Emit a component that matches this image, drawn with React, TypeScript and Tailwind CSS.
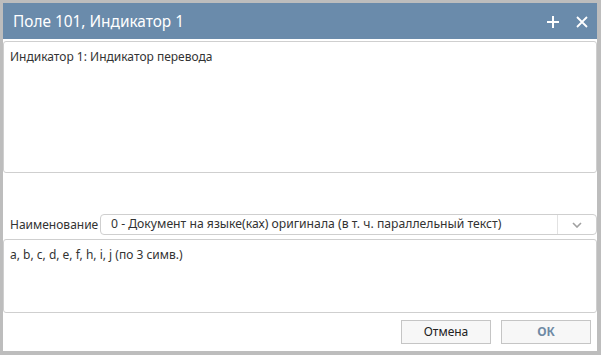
import React from "react";

export default function App() {
  const font = { fontFamily: '"Noto Sans", "Open Sans", sans-serif' };
  return (
    <div className="w-[601px] h-[355px] bg-white border-t-[3px] border-l-[3px] border-r-4 border-b-4 border-[#bdbdbd] flex flex-col" style={font}>
      <div className="h-[36px] shrink-0 bg-[#6a8bab] flex items-center pl-[10px] pr-[9px] text-white">
        <div className="text-[15.4px] flex-1 leading-none pt-[2px]">Поле 101, Индикатор 1</div>
        <svg width="14" height="14" viewBox="0 0 14 14" className="mr-[16px] mt-[2px]">
          <path d="M7 1v12M1 7h12" stroke="white" strokeWidth="2" />
        </svg>
        <svg width="12" height="12" viewBox="0 0 12 12" className="mt-[2px]">
          <path d="M1 1l10 10M11 1L1 11" stroke="white" strokeWidth="1.8" />
        </svg>
      </div>
      <div className="h-[2px] shrink-0" />
      <div className="h-[132px] shrink-0 border border-[#cfcfcf] rounded-[3px] px-[6px] pt-[7px] text-[12px] text-[#333] leading-[16px]">
        Индикатор 1: Индикатор перевода
      </div>
      <div className="h-[41px] shrink-0" />
      <div className="h-[21px] shrink-0 flex items-center">
        <div className="w-[97px] pl-[7px] text-[12px] text-[#333]">Наименование</div>
        <div className="flex-1 h-[21px] border border-[#cfcfcf] rounded-[4px] flex items-center">
          <div className="flex-1 pl-[10px] text-[12.2px] text-[#333] leading-none">0 - Документ на языке(ках) оригинала (в т. ч. параллельный текст)</div>
          <div className="w-[39px] h-full border-l border-[#e2e2e2] flex items-center justify-center">
            <svg width="10" height="6" viewBox="0 0 10 6">
              <path d="M1 1l4 4 4-4" stroke="#a0a0a0" strokeWidth="1.6" fill="none" />
            </svg>
          </div>
        </div>
      </div>
      <div className="h-[4px] shrink-0" />
      <div className="h-[74px] shrink-0 border border-[#cfcfcf] rounded-[3px] px-[6px] pt-[7px] text-[12px] text-[#333] leading-[16px]">
        a, b, c, d, e, f, h, i, j (по 3 симв.)
      </div>
      <div className="flex-1 flex items-center justify-end gap-[10px] pr-[6px]">
        <button className="w-[90px] h-[24px] bg-[#f7f7f7] border border-[#c5c5c5] text-[12px] text-[#222]">Отмена</button>
        <button className="w-[90px] h-[24px] bg-[#f7f7f7] border border-[#c5c5c5] text-[12px] font-bold text-[#6f8aa5]">ОК</button>
      </div>
    </div>
  );
}
